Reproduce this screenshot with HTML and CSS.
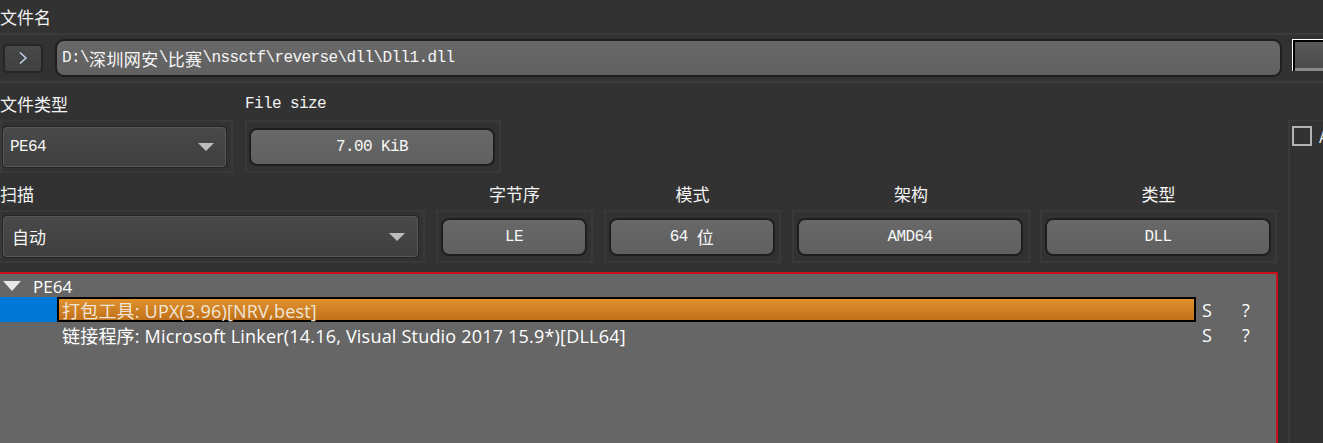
FILE: index.html
```html
<!DOCTYPE html>
<html lang="zh">
<head>
<meta charset="utf-8">
<title>Detect It Easy</title>
<link rel="stylesheet" href="styles.css">
</head>
<body>
<div class="app">
  <div class="caption-row"><span class="cjk-label">文件名</span></div>
  <div class="sep"></div>
  <div class="path-row">
    <div class="btn-arrow">
      <svg width="10" height="14" viewBox="0 0 10 14"><path d="M2 1.5 L8 7 L2 12.5" fill="none" stroke="#c8d8ec" stroke-width="1.4"/></svg>
    </div>
    <div class="path-input">D:\<span class="wide">深圳网安</span>\<span class="wide">比赛</span>\nssctf\reverse\dll\Dll1.dll</div>
    <div class="side-box"></div>
  </div>
  <div class="sep"></div>
  <div class="main">
    <div class="left">
      <div class="row row-top">
        <div class="col col-type">
          <div class="label left-label cjk-label">文件类型</div>
          <div class="frame frame-type">
            <div class="combo combo-type"><span class="mono">PE64</span><span class="arrow"></span></div>
          </div>
        </div>
        <div class="col col-size">
          <div class="label left-label mono-label">File size</div>
          <div class="frame frame-size">
            <div class="value value-size">7.00 KiB</div>
          </div>
        </div>
      </div>
      <div class="row row-scan">
        <div class="col col-scan">
          <div class="label left-label cjk-label">扫描</div>
          <div class="frame frame-scan">
            <div class="combo combo-scan"><span class="cjk-val">自动</span><span class="arrow"></span></div>
          </div>
        </div>
        <div class="col col-endian">
          <div class="label center-label cjk-label">字节序</div>
          <div class="frame frame-endian"><div class="value value-endian">LE</div></div>
        </div>
        <div class="col col-mode">
          <div class="label center-label cjk-label">模式</div>
          <div class="frame frame-mode"><div class="value value-mode">64 <span class="wide">位</span></div></div>
        </div>
        <div class="col col-arch">
          <div class="label center-label cjk-label">架构</div>
          <div class="frame frame-arch"><div class="value value-arch">AMD64</div></div>
        </div>
        <div class="col col-kind">
          <div class="label center-label cjk-label">类型</div>
          <div class="frame frame-kind"><div class="value value-kind">DLL</div></div>
        </div>
      </div>
      <div class="tree">
        <div class="tree-row tree-root">
          <span class="tri"></span><span class="root-text">PE64</span>
        </div>
        <div class="tree-row tree-item selected">
          <span class="sel-blue"></span>
          <span class="item-bar">打包工具: UPX(3.96)[NRV,best]</span>
          <span class="flag">S</span><span class="flag q">?</span>
        </div>
        <div class="tree-row tree-item">
          <span class="indent"></span>
          <span class="item-text">链接程序: Microsoft Linker(14.16, Visual Studio 2017 15.9*)[DLL64]</span>
          <span class="flag">S</span><span class="flag q">?</span>
        </div>
      </div>
    </div>
    <div class="right-panel">
      <div class="check-row"><span class="checkbox"></span><span class="check-text">A</span></div>
    </div>
  </div>
</div>
</body>
</html>
```

FILE: styles.css
```css
html, body {
  margin: 0;
  padding: 0;
  background: #323232;
  overflow: hidden;
}
.app {
  width: 1323px;
  height: 443px;
  display: flex;
  flex-direction: column;
  color: #f2f2f2;
  font-family: "Noto Sans CJK SC", sans-serif;
}
.cjk-label {
  font-family: "Noto Sans CJK SC", sans-serif;
  font-size: 17px;
  line-height: 20px;
  color: #f4f4f4;
}
.mono-label {
  font-family: "Liberation Mono", "Noto Sans CJK SC", monospace;
  font-size: 16px;
  letter-spacing: -0.6px;
  line-height: 20px;
  color: #f4f4f4;
}
.mono {
  font-family: "Liberation Mono", monospace;
  font-size: 16px;
  letter-spacing: -0.6px;
}
.wide {
  font-family: "Noto Sans CJK SC", sans-serif;
  font-size: 17px;
  letter-spacing: 0.4px;
}
.caption-row {
  height: 33px;
  display: flex;
  align-items: flex-end;
  box-sizing: border-box;
}
.caption-row .cjk-label {
  margin-bottom: 6px;
}
.sep {
  height: 2px;
  background: #3b3b3b;
}
.path-row {
  height: 46px;
  display: flex;
  align-items: center;
}
.btn-arrow {
  margin-left: 3px;
  width: 40px;
  height: 29px;
  box-sizing: border-box;
  border: 2px solid #262626;
  border-radius: 4px;
  background: linear-gradient(#484848, #404040);
  display: flex;
  align-items: center;
  justify-content: center;
}
.path-input {
  margin-left: 12px;
  width: 1227px;
  height: 38px;
  box-sizing: border-box;
  border: 2px solid #1f1f1f;
  border-radius: 9px;
  background: linear-gradient(#686868, #616161);
  display: flex;
  align-items: center;
  padding-left: 5px;
  font-family: "Liberation Mono", "Noto Sans CJK SC", monospace;
  font-size: 16px;
  letter-spacing: -0.6px;
  color: #f6f6f6;
  white-space: pre;
}
.side-box {
  margin-left: 10px;
  margin-top: -6px;
  flex: 1;
  height: 32px;
  box-sizing: border-box;
  border-top: 1px solid #ffffff;
  border-left: 1px solid #ffffff;
  box-shadow: inset 2px 2px 0 #000, inset 0 -3px 0 #8a8a8a;
  background: linear-gradient(#5a5a5a, #4a4a4a);
}
.main {
  flex: 1;
  display: flex;
  min-height: 0;
}
.left {
  width: 1278px;
  display: flex;
  flex-direction: column;
}
.row {
  display: flex;
}
.col {
  display: flex;
  flex-direction: column;
}
.label {
  height: 37px;
  display: flex;
  align-items: center;
  white-space: nowrap;
}
.center-label {
  justify-content: center;
}
.row-top .label {
  padding-top: 5px;
  box-sizing: border-box;
}
.row-scan .label {
  padding-top: 5px;
  box-sizing: border-box;
}
.frame {
  height: 53px;
  box-sizing: border-box;
  border: 2px solid #393939;
  display: flex;
  align-items: center;
  padding-left: 1px;
}
.col-type { width: 233px; }
.frame-type { width: 233px; }
.col-size { width: 256px; margin-left: 12px; }
.frame-size { width: 256px; padding-left: 2px; }
.col-scan { width: 425px; }
.frame-scan { width: 425px; }
.col-endian { width: 157px; margin-left: 11px; }
.frame-endian { width: 157px; padding-left: 3px; }
.col-mode { width: 177px; margin-left: 11px; }
.frame-mode { width: 177px; padding-left: 3px; }
.col-arch { width: 238px; margin-left: 11px; }
.frame-arch { width: 238px; padding-left: 3px; }
.col-kind { width: 237px; margin-left: 10px; }
.frame-kind { width: 237px; padding-left: 3px; }
.combo {
  box-sizing: border-box;
  height: 40px;
  border: 1px solid #585858;
  box-shadow: 0 0 0 1px #252525;
  border-radius: 4px;
  background: linear-gradient(#494949, #3f3f3f);
  display: flex;
  align-items: center;
  justify-content: space-between;
  color: #f6f6f6;
}
.combo-type { width: 223px; padding-left: 6px; padding-right: 11px; }
.combo-scan { width: 415px; padding-left: 8px; padding-right: 12px; height: 41px; }
.cjk-val {
  font-family: "Noto Sans CJK SC", sans-serif;
  font-size: 17px;
}
.arrow {
  width: 0;
  height: 0;
  border-left: 8px solid transparent;
  border-right: 8px solid transparent;
  border-top: 8px solid #bdbdbd;
}
.value {
  box-sizing: border-box;
  height: 38px;
  border: 2px solid #1e1e1e;
  border-radius: 8px;
  background: linear-gradient(#686868, #606060);
  display: flex;
  align-items: center;
  justify-content: center;
  font-family: "Liberation Mono", "Noto Sans CJK SC", monospace;
  font-size: 16px;
  letter-spacing: -0.6px;
  color: #f8f8f8;
  white-space: pre;
}
.value-size { width: 246px; }
.value-endian { width: 146px; }
.value-mode { width: 166px; }
.value-arch { width: 226px; }
.value-kind { width: 226px; }
.tree {
  margin-top: 9px;
  flex: 1;
  background: #666666;
  border-top: 2px solid #c8101c;
  border-right: 2px solid #c8101c;
  padding-top: 1px;
  font-family: "Open Sans", "Noto Sans CJK SC", sans-serif;
  font-size: 18px;
  color: #ffffff;
}
.tree-row {
  display: flex;
  align-items: center;
  white-space: nowrap;
}
.tree-root {
  height: 22px;
  font-size: 17px;
}
.tri {
  margin-left: 3px;
  width: 0;
  height: 0;
  border-left: 9px solid transparent;
  border-right: 9px solid transparent;
  border-top: 10px solid #e8e8e8;
}
.root-text {
  margin-left: 12px;
}
.tree-item {
  height: 25px;
}
.sel-blue {
  width: 57px;
  height: 25px;
  background: #0078d7;
}
.item-bar {
  box-sizing: border-box;
  width: 1139px;
  height: 25px;
  border: 2px solid #000;
  background: linear-gradient(#e0922e, #c0701a);
  padding-left: 3px;
  display: flex;
  align-items: center;
  color: #f0e6d8;
  letter-spacing: 0.2px;
}
.indent {
  width: 62px;
}
.item-text {
  width: 1134px;
  letter-spacing: 0.2px;
}
.flag {
  width: 40px;
  padding-left: 6px;
  box-sizing: border-box;
}
.right-panel {
  flex: 1;
  margin-left: 10px;
  margin-top: 37px;
  border-left: 2px solid #3a3a3a;
  border-top: 1px solid #3a3a3a;
}
.check-row {
  display: flex;
  align-items: center;
  margin-top: 3px;
  margin-left: 2px;
}
.checkbox {
  width: 20px;
  height: 20px;
  box-sizing: border-box;
  border: 2px solid #b4b4b4;
}
.check-text {
  margin-left: 7px;
  font-size: 16px;
  color: #f0f0f0;
}
```
